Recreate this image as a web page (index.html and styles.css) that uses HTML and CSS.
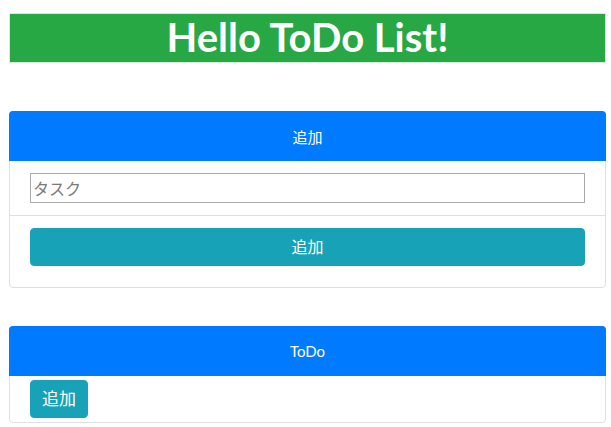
FILE: index.html
```html
<!DOCTYPE html>
<html lang="ja">
<head>
<meta charset="utf-8">
<title>Hello ToDo List!</title>
<link rel="stylesheet" href="styles.css">
</head>
<body>
<div class="page">
  <h1 class="title">Hello ToDo List!</h1>

  <section class="card card-add">
    <div class="card-header">追加</div>
    <div class="row row-input">
      <input class="task-input" type="text" placeholder="タスク">
    </div>
    <div class="row row-button">
      <button class="btn btn-block" type="button">追加</button>
    </div>
  </section>

  <section class="card card-todo">
    <div class="card-header">ToDo</div>
    <div class="row row-todo">
      <button class="btn btn-small" type="button">追加</button>
    </div>
  </section>
</div>
</body>
</html>
```

FILE: styles.css
```css
* { box-sizing: border-box; }

html, body {
  margin: 0;
  padding: 0;
  background: #ffffff;
}

body {
  font-family: Lato, "Noto Sans CJK JP", sans-serif;
  font-size: 16px;
  color: #212529;
}

.page {
  padding: 13px 5px 0 9px;
}

.title {
  margin: 0;
  height: 50px;
  background: #28a745;
  border: 1px solid #d7ecdc;
  color: #ffffff;
  font-size: 40px;
  font-weight: 700;
  line-height: 46px;
  text-align: center;
}

.card {
  border: 1px solid #dfdfdf;
  border-radius: 4px;
  background: #ffffff;
}

.card-add { margin-top: 48px; }
.card-todo { margin-top: 38px; }

.card-header {
  margin: -1px -1px 0;
  height: 50px;
  background: #007bff;
  color: #ffffff;
  border-radius: 4px 4px 0 0;
  display: flex;
  align-items: center;
  justify-content: center;
  font-size: 15px;
}

.row {
  padding: 12px 20px;
}

.row-input {
  border-bottom: 1px solid #dfdfdf;
}

.row-button {
  padding-bottom: 21px;
}

.row-todo {
  padding: 4px 20px 4px;
}

.task-input {
  display: block;
  width: 100%;
  height: 30px;
  margin: 0;
  padding: 0 2px;
  border: 1px solid #a9a9a9;
  border-radius: 0;
  font-family: Lato, "Noto Sans CJK JP", sans-serif;
  font-size: 16px;
  color: #212529;
}

.task-input::placeholder {
  color: #7a7a7a;
}

.btn {
  display: block;
  height: 38px;
  margin: 0;
  border: 1px solid #17a2b8;
  border-radius: 4px;
  background: #17a2b8;
  color: #ffffff;
  font-family: Lato, "Noto Sans CJK JP", sans-serif;
  font-size: 16px;
  line-height: 24px;
  padding: 0 12px;
}

.btn-block {
  width: 100%;
}

.btn-small {
  width: 58px;
  padding: 0;
  font-size: 17px;
}
```
